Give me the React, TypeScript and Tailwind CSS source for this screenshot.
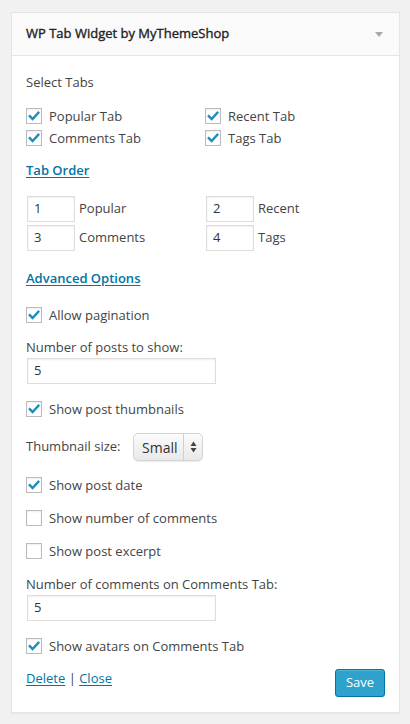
import React from "react";

const font = "font-['Open_Sans',_'Liberation_Sans',_sans-serif]";

const Check: React.FC<{ checked?: boolean; label: string }> = ({ checked, label }) => (
  <label className="flex items-center gap-[7px] h-4 text-[13px] leading-[18px] text-[#444]">
    <span className="w-4 h-4 shrink-0 border border-[#bbb] bg-white shadow-[inset_0_1px_2px_rgba(0,0,0,0.07)] flex items-center justify-center">
      {checked && (
        <svg width="12" height="12" viewBox="0 0 12 12">
          <path d="M1.8 6.2 L4.6 9 L10.4 2.8" fill="none" stroke="#1e8cbe" strokeWidth="2.4" strokeLinecap="square" />
        </svg>
      )}
    </span>
    {label}
  </label>
);

const TextInput: React.FC<{ value: string; className?: string }> = ({ value, className }) => (
  <div
    className={`h-[26px] border border-[#ddd] bg-white shadow-[inset_0_1px_2px_rgba(0,0,0,0.07)] pl-[6px] flex items-center text-[13px] text-[#333] ${className ?? ""}`}
  >
    {value}
  </div>
);

const OrderField: React.FC<{ num: string; label: string }> = ({ num, label }) => (
  <div className="flex items-center gap-1 ml-px">
    <TextInput value={num} className="w-12" />
    <span className="text-[13px] text-[#444]">{label}</span>
  </div>
);

const LinkHeading: React.FC<{ children: React.ReactNode; className?: string }> = ({ children, className }) => (
  <div className={`text-[13px] leading-[18px] font-semibold text-[#0074a2] underline underline-offset-2 ${className ?? ""}`}>
    {children}
  </div>
);

const App: React.FC = () => {
  return (
    <div className={`w-[410px] h-[724px] bg-[#f1f1f1] pt-3 pl-[11px] pr-[10px] ${font}`}>
      <div className="border border-[#e5e5e5] bg-white shadow-[0_1px_1px_rgba(0,0,0,0.04)]">
        <div className="h-[43px] bg-[#fafafa] border-b border-[#e5e5e5] flex items-center justify-between pl-[14px] pr-4">
          <span className="text-[13px] text-[#222] [-webkit-text-stroke:0.35px_#222]">WP Tab Widget by MyThemeShop</span>
          <svg width="8" height="5" viewBox="0 0 8 5">
            <path d="M0 0 H8 L4 5 Z" fill="#aaa" />
          </svg>
        </div>

        <div className="px-[14px] pt-[17px] pb-[15px] text-[13px] text-[#444]">
          <div className="leading-[18px] text-[#444]">Select Tabs</div>

          <div className="grid grid-cols-[179px_1fr] gap-y-[6px] mt-[17px]">
            <Check checked label="Popular Tab" />
            <Check checked label="Recent Tab" />
            <Check checked label="Comments Tab" />
            <Check checked label="Tags Tab" />
          </div>

          <LinkHeading className="mt-[15px]">Tab Order</LinkHeading>

          <div className="grid grid-cols-[179px_1fr] gap-y-[3px] mt-[17px]">
            <OrderField num="1" label="Popular" />
            <OrderField num="2" label="Recent" />
            <OrderField num="3" label="Comments" />
            <OrderField num="4" label="Tags" />
          </div>

          <LinkHeading className="mt-[18px]">Advanced Options</LinkHeading>

          <div className="mt-5">
            <Check checked label="Allow pagination" />
          </div>

          <div className="mt-[15px] leading-[18px]">Number of posts to show:</div>
          <TextInput value="5" className="w-[189px] mt-[2px] ml-px" />

          <div className="mt-[17px]">
            <Check checked label="Show post thumbnails" />
          </div>

          <div className="mt-4 flex items-center">
            <span className="w-[107px]">Thumbnail size:</span>
            <div className="h-7 w-[70px] rounded-[5px] border border-[#d4d4d4] bg-gradient-to-b from-[#fbfbfb] to-[#e9e9e9] shadow-[0_1px_1px_rgba(0,0,0,0.08)] flex items-center text-[#333]">
              <span className="pl-2 w-[49px] text-[14px]">Small</span>
              <span className="h-full w-px bg-[#d0d0d0]" />
              <span className="flex-1 flex justify-center">
                <svg width="7" height="12" viewBox="0 0 7 12">
                  <path d="M3.5 0.5 L6.5 5 H0.5 Z M0.5 7 H6.5 L3.5 11.5 Z" fill="#444" />
                </svg>
              </span>
            </div>
          </div>

          <div className="mt-4">
            <Check checked label="Show post date" />
          </div>
          <div className="mt-[17px]">
            <Check label="Show number of comments" />
          </div>
          <div className="mt-[17px]">
            <Check label="Show post excerpt" />
          </div>

          <div className="mt-4 leading-[18px]">Number of comments on Comments Tab:</div>
          <TextInput value="5" className="w-[189px] mt-[2px] ml-px" />

          <div className="mt-[17px]">
            <Check checked label="Show avatars on Comments Tab" />
          </div>

          <div className="mt-[15px] flex justify-between items-start">
            <div className="leading-4 pt-px text-[13px]">
              <span className="text-[#0074a2] underline underline-offset-2">Delete</span>
              <span className="text-[#444]"> | </span>
              <span className="text-[#0074a2] underline underline-offset-2">Close</span>
            </div>
            <button className="h-7 w-[50px] rounded-[3px] border border-[#0074a2] bg-[#2ea2cc] text-white text-[13px] shadow-[inset_0_1px_0_rgba(120,200,230,0.5)]">
              Save
            </button>
          </div>
        </div>
      </div>
    </div>
  );
};

export default App;
